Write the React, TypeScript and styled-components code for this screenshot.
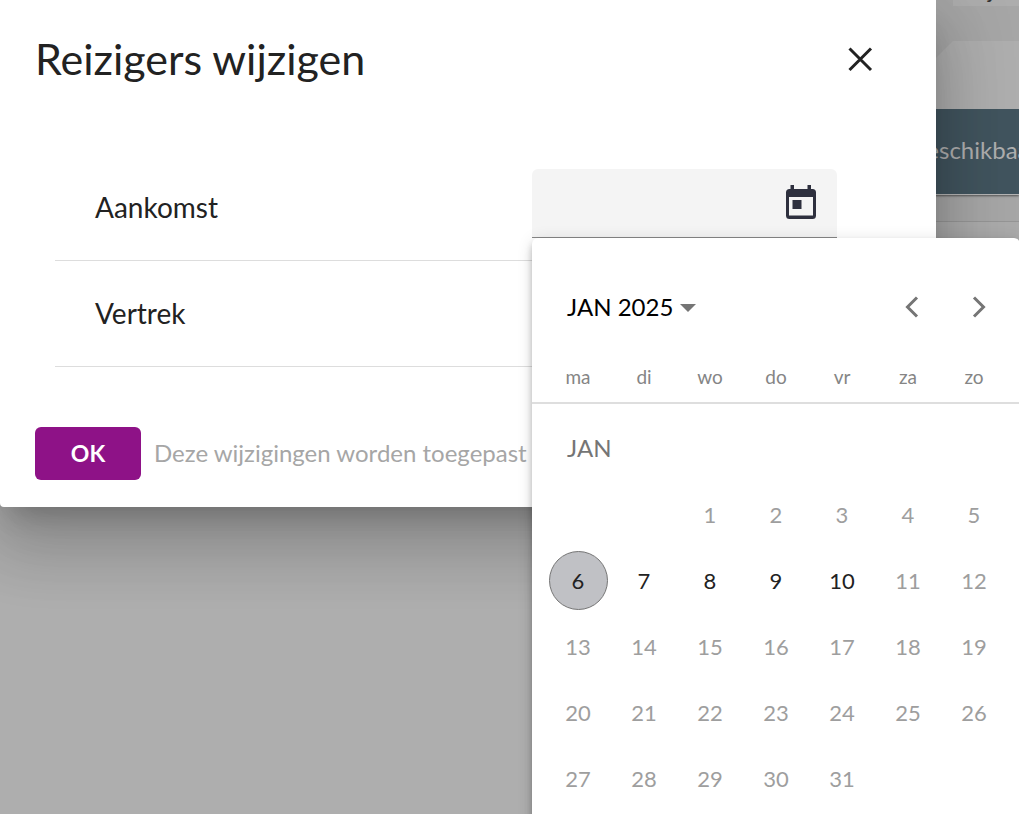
import React, { useState } from 'react';
import styled, { createGlobalStyle } from 'styled-components';

const GlobalStyle = createGlobalStyle`
  *, *::before, *::after { box-sizing: border-box; }
  body { margin: 0; font-family: Lato, "Open Sans", sans-serif; color: #222; }
  button, input { font: inherit; color: inherit; }
  button { border: 0; padding: 0; background: none; cursor: pointer; }
`;

const Shell = styled.div`
  position: relative;
  min-height: 100vh;
  overflow: hidden;
  background: #aeaeae;
`;

const Backdrop = styled.div`
  display: flex;
  flex-direction: column;
  background: #a6a6a6;
`;

const TopTabs = styled.div`
  display: flex;
  justify-content: flex-end;
  height: 6px;
`;

const TopTab = styled.div`
  display: flex;
  align-items: flex-end;
  justify-content: center;
  width: 66px;
  padding: 0 8px 5px 0;
  background: #adadad;
  color: #333;
  font-size: 23px;
  line-height: 24px;
`;

const Panel = styled.div`
  height: 68px;
  margin-top: 35px;
  background: #aeaeae;
  clip-path: polygon(0 100%, 0 0, calc(100% - 100px) 34px, calc(100% - 66px) 0, 100% 0, 100% 100%);
`;

const ColumnHead = styled.div`
  display: flex;
  align-items: center;
  justify-content: flex-end;
  height: 86px;
  padding-bottom: 4px;
  border-bottom: 1px solid #b4b4b4;
  background: #41545e;
  color: #aeaeae;
  font-size: 24px;
  white-space: nowrap;
  box-shadow: 0 1px 2px rgba(0, 0, 0, 0.5);

  span { width: 108px; }
`;

const SubRow = styled.div`
  height: 27px;
  border-bottom: 1px solid #959595;
`;

const SubRowLast = styled.div`
  height: 60px;
  background: #aaa;
`;

const Dialog = styled.section`
  position: absolute;
  top: 0;
  left: 0;
  right: 83px;
  padding: 32px 60px 27px 35px;
  border-radius: 0 0 4px 4px;
  background: #fff;
  box-shadow:
    0 18px 25px -12px rgba(0, 0, 0, 0.2),
    0 40px 63px 5px rgba(0, 0, 0, 0.14),
    0 15px 76px 13px rgba(0, 0, 0, 0.12);
`;

const DialogHeader = styled.header`
  display: flex;
  align-items: center;
  justify-content: space-between;
  height: 54px;
`;

const Title = styled.h1`
  margin: 0;
  font-size: 43px;
  font-weight: 400;
  line-height: 54px;
`;

const CloseButton = styled.button`
  display: flex;
  svg { display: block; }
`;

const Fields = styled.div`
  margin: 69px 0 60px 20px;
`;

const FieldRow = styled.div`
  display: flex;
  align-items: flex-start;
  justify-content: space-between;
  height: 106px;
  padding: 14px 39px 0 40px;
  border-bottom: 1px solid #ddd;
`;

const FieldLabel = styled.label`
  font-size: 28px;
  line-height: 76px;
`;

const DateField = styled.div`
  position: relative;
  display: flex;
  align-items: center;
  width: 305px;
  height: 69px;
  padding: 0 20px 2px 16px;
  border-bottom: 1px solid #888;
  border-radius: 6px 6px 0 0;
  background: #f4f4f4;
`;

const DateInput = styled.input`
  flex: 1;
  min-width: 0;
  border: 0;
  outline: 0;
  background: transparent;
  font-size: 28px;
`;

const IconButton = styled.button`
  display: flex;
  color: #2e303e;
`;

const Actions = styled.footer`
  display: flex;
  align-items: center;
  gap: 13px;
`;

const OkButton = styled.button`
  width: 106px;
  height: 53px;
  padding-bottom: 2px;
  border-radius: 6px;
  background: #8e1287;
  color: #fff;
  font-size: 23px;
  font-weight: 700;
`;

const Hint = styled.p`
  margin: 0;
  padding-bottom: 2px;
  color: #a6a6a6;
  font-size: 24px;
  white-space: nowrap;
`;

const Calendar = styled.div`
  position: absolute;
  z-index: 1;
  top: calc(100% + 1px);
  left: 0;
  width: 488px;
  padding-bottom: 32px;
  border-radius: 6px;
  background: #fff;
  box-shadow:
    0 3px 7px -2px rgba(0, 0, 0, 0.2),
    0 7px 8px rgba(0, 0, 0, 0.14),
    0 2px 16px rgba(0, 0, 0, 0.12);
`;

const CalendarHeader = styled.div`
  display: flex;
  align-items: center;
  justify-content: space-between;
  height: 66px;
  margin: 36px 8px 0 35px;
`;

const PeriodButton = styled.button`
  display: flex;
  align-items: center;
  gap: 7px;
  padding-bottom: 2px;
  color: #000;
  font-size: 24px;

  svg { margin-top: 4px; }
`;

const Arrows = styled.div`
  display: flex;
  color: #757575;
`;

const ArrowButton = styled.button`
  display: flex;
  align-items: center;
  justify-content: center;
  width: 67px;
  height: 66px;
`;

const Month = styled.table`
  width: 100%;
  border-collapse: collapse;
  table-layout: fixed;
`;

const EdgeCol = styled.col`
  width: 13px;
`;

const Weekday = styled.th`
  height: 63px;
  padding: 10px 0 0;
  border-bottom: 2px solid #dedede;
  color: #858585;
  font-size: 19px;
  font-weight: 400;
`;

const MonthLabel = styled.td`
  height: 78px;
  padding: 9px 0 0 22px;
  color: #757575;
  font-size: 24px;
`;

const DayCell = styled.td`
  height: 66px;
  padding: 0;
  text-align: center;
`;

const Day = styled.button<{ $today?: boolean }>`
  width: 59px;
  height: 59px;
  border: 1px solid ${({ $today }) => ($today ? '#757575' : 'transparent')};
  border-radius: 50%;
  background: ${({ $today }) => ($today ? '#c0c1c5' : 'transparent')};
  font-size: 22px;
  vertical-align: middle;

  &:disabled { color: #9e9e9e; cursor: default; }
`;

const weekdays = ['ma', 'di', 'wo', 'do', 'vr', 'za', 'zo'];
const weeks = Array.from({ length: 5 }, (_, w) =>
  weekdays.map((_, d) => {
    const day = w * 7 + d - 1;
    return day >= 1 && day <= 31 ? day : null;
  }),
);

function DatePopup() {
  return (
    <Calendar role="dialog" aria-label="Kies een datum">
      <CalendarHeader>
        <PeriodButton type="button">
          JAN 2025
          <svg width="16" height="8" viewBox="0 0 16 8" aria-hidden="true">
            <path d="M0 0h16L8 8z" fill="#757575" />
          </svg>
        </PeriodButton>
        <Arrows>
          <ArrowButton type="button" aria-label="Vorige maand">
            <svg width="14" height="22" viewBox="0 0 14 22" fill="none" stroke="currentColor" strokeWidth="3" aria-hidden="true">
              <path d="M12 1.5 2.5 11l9.5 9.5" />
            </svg>
          </ArrowButton>
          <ArrowButton type="button" aria-label="Volgende maand">
            <svg width="14" height="22" viewBox="0 0 14 22" fill="none" stroke="currentColor" strokeWidth="3" aria-hidden="true">
              <path d="M2 1.5 11.5 11 2 20.5" />
            </svg>
          </ArrowButton>
        </Arrows>
      </CalendarHeader>
      <Month>
        <colgroup>
          <EdgeCol />
          {weekdays.map((name) => <col key={name} />)}
          <EdgeCol />
        </colgroup>
        <thead>
          <tr>
            <Weekday as="td" />
            {weekdays.map((name) => <Weekday key={name} scope="col">{name}</Weekday>)}
            <Weekday as="td" />
          </tr>
        </thead>
        <tbody>
          <tr>
            <td />
            <MonthLabel colSpan={7}>JAN</MonthLabel>
            <td />
          </tr>
          {weeks.map((week, w) => (
            <tr key={w}>
              <td />
              {week.map((day, d) => (
                <DayCell key={d}>
                  {day && <Day type="button" $today={day === 6} disabled={day < 6 || day > 10}>{day}</Day>}
                </DayCell>
              ))}
              <td />
            </tr>
          ))}
        </tbody>
      </Month>
    </Calendar>
  );
}

export default function App() {
  const [open, setOpen] = useState(true);
  return (
    <Shell>
      <GlobalStyle />
      <Backdrop>
        <TopTabs><TopTab>Prijs</TopTab></TopTabs>
        <Panel />
        <ColumnHead><span>Beschikbaar</span></ColumnHead>
        <SubRow />
        <SubRowLast />
      </Backdrop>
      <Dialog role="dialog" aria-labelledby="dialog-title">
        <DialogHeader>
          <Title id="dialog-title">Reizigers wijzigen</Title>
          <CloseButton type="button" aria-label="Sluiten">
            <svg width="32" height="32" viewBox="0 0 32 32" stroke="currentColor" strokeWidth="3" aria-hidden="true">
              <path d="M5.500 5.500l21.500 21.500M27 5.500 5.500 27" />
            </svg>
          </CloseButton>
        </DialogHeader>
        <Fields>
          <FieldRow>
            <FieldLabel htmlFor="arrival">Aankomst</FieldLabel>
            <DateField>
              <DateInput id="arrival" type="text" />
              <IconButton type="button" aria-label="Kalender openen" onClick={() => setOpen(!open)}>
                <svg width="32" height="34" viewBox="0 0 32 34" fill="currentColor" aria-hidden="true">
                  <path fillRule="evenodd" d="M5.500 0h3.500v4h13.500V0H26v4h1.500a3.500 3.500 0 0 1 3.500 3.500v23A3.500 3.500 0 0 1 27.500 34h-23A3.500 3.500 0 0 1 1 30.500v-23A3.500 3.500 0 0 1 4.500 4h1zM4 12v18.500h24V12zM7.500 15h9v9h-9z" />
                </svg>
              </IconButton>
              {open && <DatePopup />}
            </DateField>
          </FieldRow>
          <FieldRow>
            <FieldLabel htmlFor="departure">Vertrek</FieldLabel>
            <DateField>
              <DateInput id="departure" type="text" />
            </DateField>
          </FieldRow>
        </Fields>
        <Actions>
          <OkButton type="button">OK</OkButton>
          <Hint>Deze wijzigingen worden toegepast</Hint>
        </Actions>
      </Dialog>
    </Shell>
  );
}
